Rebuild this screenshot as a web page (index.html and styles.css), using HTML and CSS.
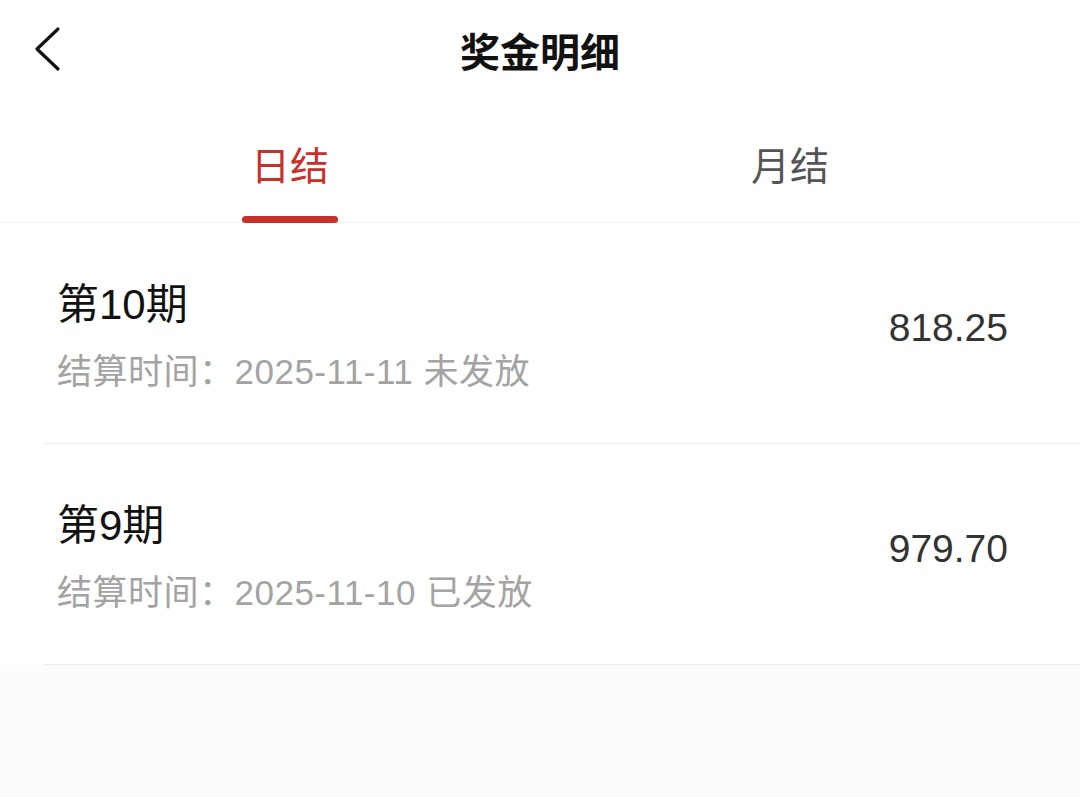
FILE: index.html
```html
<!DOCTYPE html>
<html lang="zh-CN">
<head>
<meta charset="utf-8">
<title>奖金明细</title>
<link rel="stylesheet" href="styles.css">
</head>
<body>
<div class="page">
  <header class="nav">
    <span class="back">
      <svg width="30" height="46" viewBox="0 0 30 46"><path d="M24 3 L3 23 L24 43" fill="none" stroke="#111" stroke-width="3.2" stroke-linecap="round" stroke-linejoin="round"/></svg>
    </span>
    <h1 class="title">奖金明细</h1>
  </header>
  <nav class="tabs">
    <div class="tab active"><span class="tab-label">日结</span><span class="indicator"></span></div>
    <div class="tab"><span class="tab-label">月结</span><span class="indicator hidden"></span></div>
  </nav>
  <ul class="list">
    <li class="row">
      <div class="info">
        <div class="period">第10期</div>
        <div class="meta">结算时间：2025-11-11 未发放</div>
      </div>
      <div class="amount">818.25</div>
    </li>
    <li class="row">
      <div class="info">
        <div class="period">第9期</div>
        <div class="meta">结算时间：2025-11-10 已发放</div>
      </div>
      <div class="amount">979.70</div>
    </li>
  </ul>
</div>
</body>
</html>
```

FILE: styles.css
```css
* { box-sizing: border-box; }
html, body {
  margin: 0;
  padding: 0;
  background: #fcfbfd;
  font-family: "Liberation Sans", "Noto Sans CJK SC", sans-serif;
}
.page {
  width: 1080px;
}
.nav {
  height: 106px;
  background: #fff;
  display: flex;
  align-items: center;
  justify-content: center;
  position: relative;
}
.back {
  position: absolute;
  left: 34px;
  top: 26px;
  width: 30px;
  height: 46px;
}
.back svg { display: block; }
.title {
  margin: 0;
  font-size: 40px;
  font-weight: 700;
  color: #111;
  line-height: 48px;
  letter-spacing: 0;
}
.tabs {
  display: flex;
  padding: 0 40px;
  height: 117px;
  background: #fff;
  border-bottom: 1px solid #f0f0f0;
}
.tab {
  flex: 1;
  display: flex;
  flex-direction: column;
  align-items: center;
  padding-top: 41px;
}
.tab-label {
  font-size: 39px;
  line-height: 40px;
  color: #555;
}
.tab.active .tab-label { color: #c8302a; }
.indicator {
  display: block;
  width: 96px;
  height: 7px;
  margin-top: 29px;
  margin-bottom: -1px;
  border-radius: 4px;
  background: #c8302a;
  position: relative;
}
.indicator.hidden { visibility: hidden; }
.list {
  list-style: none;
  margin: 0;
  padding: 0 0 0 44px;
  background: #fff;
}
.row {
  display: flex;
  justify-content: space-between;
  align-items: flex-start;
  height: 221px;
  padding: 58px 72px 0 13px;
  border-bottom: 1px solid #ececec;
}
.period {
  font-size: 42px;
  line-height: 48px;
  color: #111;
}
.meta {
  margin-top: 21px;
  font-size: 35px;
  line-height: 44px;
  letter-spacing: 0.5px;
  color: #a3a3a3;
}
.amount {
  margin-top: 25px;
  font-size: 39px;
  line-height: 44px;
  color: #333;
}
```
